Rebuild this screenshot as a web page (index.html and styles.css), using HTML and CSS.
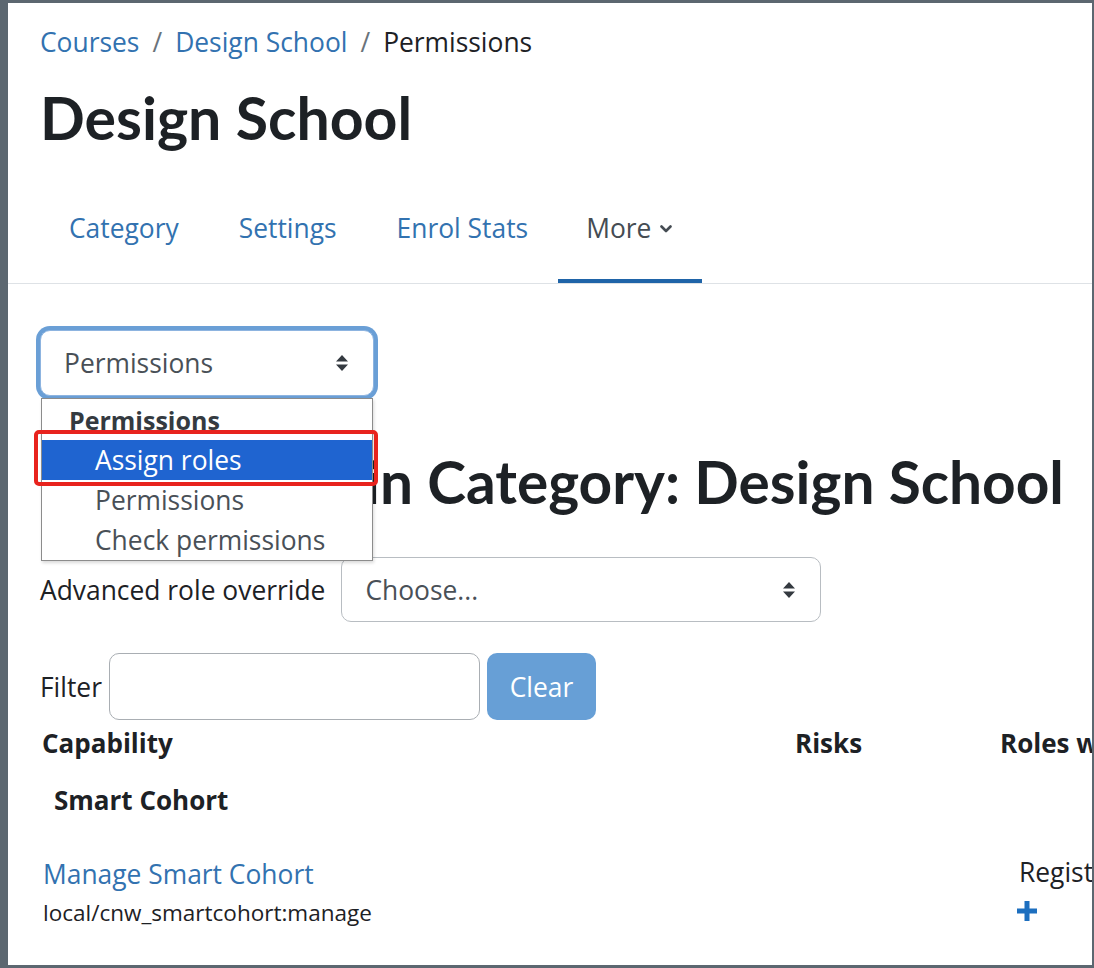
FILE: index.html
```html
<!DOCTYPE html>
<html lang="en">
<head>
<meta charset="utf-8">
<title>Design School: Permissions</title>
<link rel="stylesheet" href="styles.css">
</head>
<body>
<div class="frame">
  <header class="page-header">
    <nav class="breadcrumb">
      <a href="#">Courses</a><span class="sep">/</span><a href="#">Design School</a><span class="sep">/</span><span class="current">Permissions</span>
    </nav>
    <h1 class="page-title">Design School</h1>
  </header>

  <nav class="tabs">
    <a class="tab" href="#">Category</a>
    <a class="tab" href="#">Settings</a>
    <a class="tab" href="#">Enrol Stats</a>
    <a class="tab active" href="#">More
      <svg class="chevron" viewBox="0 0 12 8" width="12" height="8"><path d="M1.5 1.5 L6 6 L10.5 1.5" fill="none" stroke="currentColor" stroke-width="2.6" stroke-linecap="round" stroke-linejoin="round"/></svg>
    </a>
  </nav>

  <main class="content">
    <div class="jump">
      <div class="select focused">
        <span>Permissions</span>
        <svg class="updown" viewBox="0 0 14 18" width="14" height="18"><path d="M7 1 L13 7.5 H1 Z M7 17 L13 10.5 H1 Z" fill="#343a40"/></svg>
      </div>
      <ul class="menu">
        <li class="group">Permissions</li>
        <li class="item selected">Assign roles<span class="highlight"></span></li>
        <li class="item">Permissions</li>
        <li class="item">Check permissions</li>
      </ul>
    </div>

    <h2 class="section-title">Permissions in Category: Design School</h2>

    <div class="form-row">
      <label class="label">Advanced role override</label>
      <div class="select wide">
        <span>Choose...</span>
        <svg class="updown" viewBox="0 0 14 18" width="14" height="18"><path d="M7 1 L13 7.5 H1 Z M7 17 L13 10.5 H1 Z" fill="#343a40"/></svg>
      </div>
    </div>

    <div class="form-row filter-row">
      <label class="label">Filter</label>
      <input class="input" type="text">
      <button class="btn-clear" type="button">Clear</button>
    </div>

    <table class="caps">
      <colgroup><col class="c1"><col class="c2"><col class="c3"></colgroup>
      <thead>
        <tr><th>Capability</th><th>Risks</th><th>Roles with permission</th></tr>
      </thead>
      <tbody>
        <tr class="component"><td colspan="3">Smart Cohort</td></tr>
        <tr class="cap">
          <td>
            <a class="cap-name" href="#">Manage Smart Cohort</a>
            <div class="cap-id">local/cnw_smartcohort:manage</div>
          </td>
          <td></td>
          <td class="roles">
            <div class="role">Registered user</div>
            <svg class="plus" viewBox="0 0 24 24" width="24" height="24"><path d="M9.5 2 h5 v7.5 h7.5 v5 h-7.5 v7.5 h-5 v-7.5 h-7.5 v-5 h7.5 z" fill="#1d6fbf"/></svg>
          </td>
        </tr>
      </tbody>
    </table>
  </main>
</div>
</body>
</html>
```

FILE: styles.css
```css
html, body {
  margin: 0;
  height: 968px;
  overflow: hidden;
}

body {
  background: #5c6770;
  font-family: "Open Sans", "Noto Sans", sans-serif;
  color: #1d2125;
  font-size: 26.4px;
}

.frame {
  margin: 3px 2px 0 8px;
  height: 962px;
  background: #fff;
  overflow: hidden;
}

a {
  color: #3272b0;
  text-decoration: none;
}

/* header */
.page-header {
  padding: 21px 32px 0;
}

.breadcrumb {
  line-height: 36px;
  white-space: nowrap;
}

.breadcrumb .sep {
  color: #6a737b;
  padding: 0 13px;
}

.breadcrumb .current {
  color: #1d2125;
}

.page-title {
  margin: 22px 0 0;
  font-family: "Lato", "Open Sans", sans-serif;
  font-size: 59px;
  line-height: 72px;
  font-weight: 700;
}

/* secondary navigation */
.tabs {
  display: flex;
  margin-top: 19px;
  padding-left: 31px;
  border-bottom: 1px solid #dee2e6;
}

.tab {
  display: flex;
  align-items: center;
  gap: 9px;
  padding: 37px 30px 33px;
  line-height: 36px;
  border-bottom: 4px solid transparent;
}

.tab.active {
  color: #454c53;
  border-bottom-color: #1f64a8;
  padding-left: 28px;
}

.chevron {
  margin-top: 2px;
}

/* main */
.content {
  padding: 46px 32px 0;
  white-space: nowrap;
}

.jump {
  position: relative;
  width: 334px;
}

.select {
  display: flex;
  align-items: center;
  justify-content: space-between;
  box-sizing: border-box;
  height: 66px;
  padding: 0 24px 0 23px;
  border: 1px solid #b8bdc2;
  border-radius: 10px;
  color: #495057;
  background: #fff;
}

.select.focused {
  border-color: #8db4e0;
  box-shadow: 0 0 0 4px #6a9fd6;
}

.updown {
  flex: none;
}

.menu {
  position: absolute;
  top: 68px;
  left: 1px;
  width: 332px;
  box-sizing: border-box;
  margin: 0;
  padding: 1px 0 0;
  list-style: none;
  background: #fff;
  border: 1px solid #8c8c8c;
  box-shadow: 1px 2px 3px rgba(0, 0, 0, 0.15);
  z-index: 2;
}

.menu li {
  height: 40px;
  line-height: 40px;
}

.menu .group {
  font-weight: 700;
  font-size: 25px;
  color: #343a40;
  padding-left: 27px;
}

.menu .item {
  position: relative;
  padding-left: 53px;
  color: #495057;
}

.menu .item.selected {
  background: #1f64d0;
  color: #fff;
}

.highlight {
  position: absolute;
  left: -8px;
  right: -6px;
  top: -10px;
  bottom: -6px;
  border: 4px solid #e8231d;
  border-radius: 5px;
}

.section-title {
  margin: 49px 0 0;
  font-family: "Lato", "Open Sans", sans-serif;
  font-size: 58.6px;
  line-height: 72px;
  font-weight: 700;
}

.form-row {
  display: flex;
  align-items: center;
  gap: 16px;
  margin-top: 40px;
}

.label {
  color: #1d2125;
}

.select.wide {
  width: 480px;
  height: 65px;
}

.filter-row {
  gap: 7px;
  margin-top: 31px;
}

.input {
  box-sizing: border-box;
  width: 371px;
  height: 67px;
  border: 1px solid #a9aeb3;
  border-radius: 10px;
  font: inherit;
}

.btn-clear {
  box-sizing: border-box;
  width: 109px;
  height: 67px;
  border: 0;
  border-radius: 10px;
  background: #679fd6;
  color: #fff;
  font: inherit;
}

/* capability table */
.caps {
  border-collapse: collapse;
  table-layout: fixed;
  width: 1100px;
  margin-left: 2px;
}

.c1 { width: 753px; }
.c2 { width: 205px; }
.c3 { width: 142px; }

.caps th {
  text-align: left;
  font-weight: 700;
  font-size: 26px;
  padding: 5px 0;
  line-height: 36px;
}

.caps .component td {
  font-weight: 700;
  font-size: 26px;
  padding: 16px 12px 0;
  line-height: 36px;
}

.caps .cap td {
  vertical-align: top;
  padding-top: 38px;
}

.cap-name {
  display: block;
  line-height: 36px;
}

.cap-id {
  font-size: 22.5px;
  line-height: 42px;
}

.roles {
  padding-left: 19px;
}

.role {
  line-height: 36px;
  margin-top: -2px;
}

.plus {
  display: block;
  margin: 9px 0 0 -4px;
}
```
